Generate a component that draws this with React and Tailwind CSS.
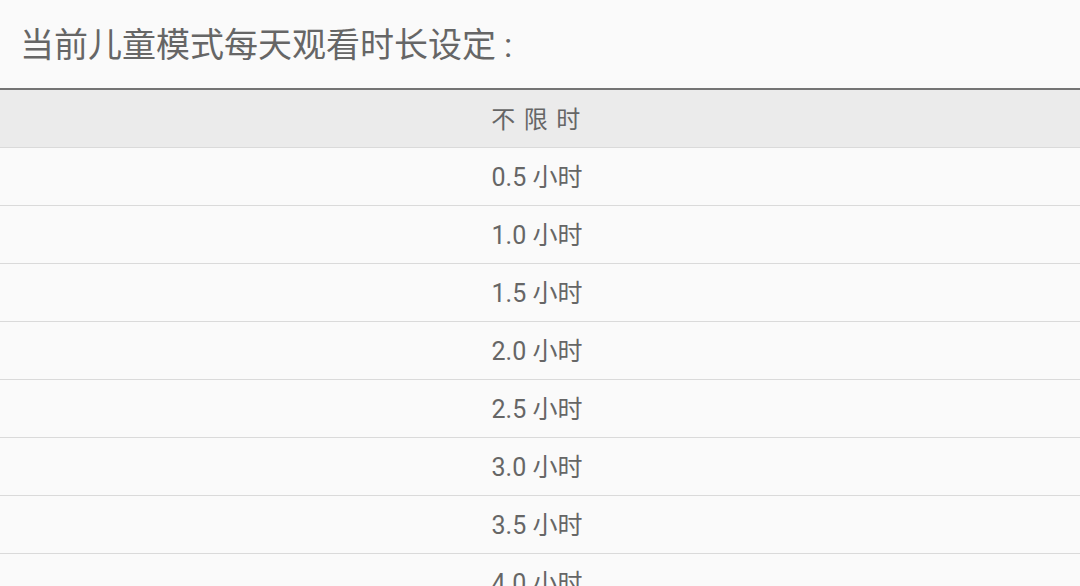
const options = ["0.5", "1.0", "1.5", "2.0", "2.5", "3.0", "3.5", "4.0"];

export default function App() {
  return (
    <div
      className="h-[586px] w-[1080px] overflow-hidden bg-[#fafafa] text-[#666666]"
      style={{ fontFamily: 'Roboto, "Noto Sans CJK SC", sans-serif' }}
    >
      <div className="flex h-[88px] items-center pl-[20px] pt-[2px] text-[34px]">
        当前儿童模式每天观看时长设定<span className="ml-[8px]">:</span>
      </div>
      <div className="border-t-2 border-[#747474]">
        <div className="flex h-[58px] items-center justify-center border-b border-[#dadada] bg-[#ebebeb] pt-[3px] text-[24px] tracking-[8.5px]">
          不限时
        </div>
        {options.map((value) => (
          <div
            key={value}
            className="flex h-[58px] items-center justify-center border-b border-[#dadada] pr-[6px] pt-[3px] text-[25px]"
          >
            {value} 小时
          </div>
        ))}
      </div>
    </div>
  );
}
